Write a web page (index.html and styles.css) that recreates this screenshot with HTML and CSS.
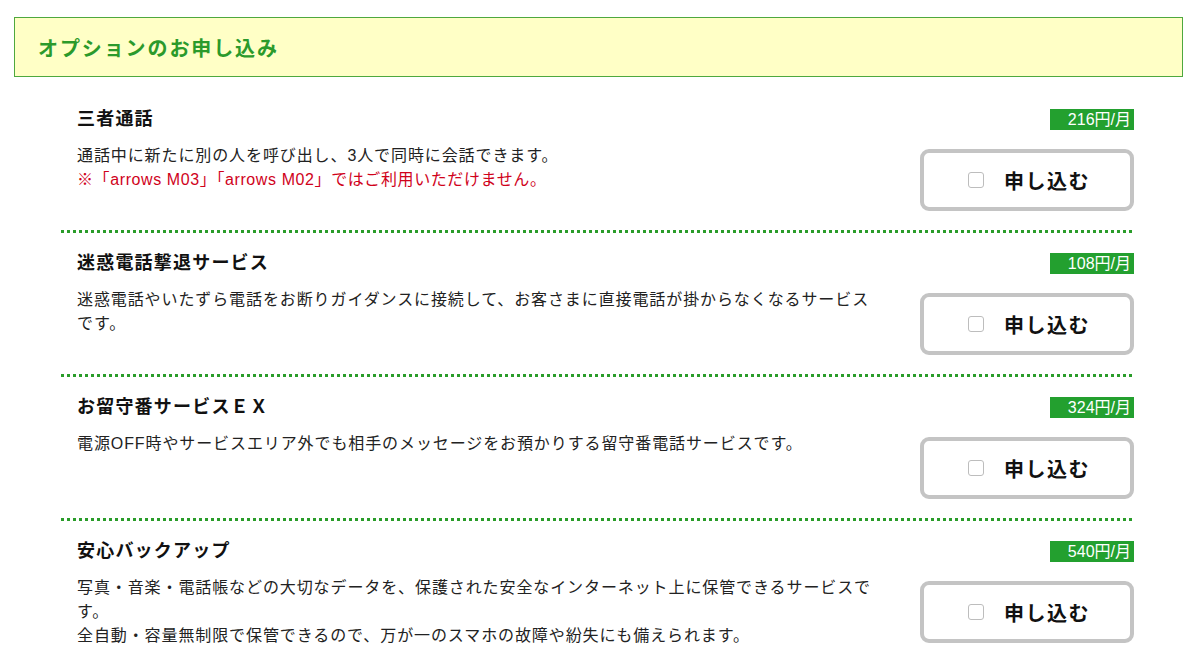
FILE: index.html
```html
<!DOCTYPE html>
<html lang="ja">
<head>
    <meta charset="UTF-8">
    <meta name="viewport" content="width=device-width, initial-scale=1.0">
    <title>オプションのお申し込み</title>
    <link rel="stylesheet" href="styles.css">
</head>
<body>
    <h2 class="section-title">オプションのお申し込み</h2>

    <div class="options">
        <div class="option">
            <h3 class="option-name">三者通話</h3>
            <div class="price">216円/月</div>
            <div class="desc">
                通話中に新たに別の人を呼び出し、3人で同時に会話できます。<br>
                <span class="note">※「arrows M03」「arrows M02」ではご利用いただけません。</span>
            </div>
            <label class="apply"><input type="checkbox" class="check"><span>申し込む</span></label>
        </div>

        <div class="option">
            <h3 class="option-name">迷惑電話撃退サービス</h3>
            <div class="price">108円/月</div>
            <div class="desc">迷惑電話やいたずら電話をお断りガイダンスに接続して、お客さまに直接電話が掛からなくなるサービスです。</div>
            <label class="apply"><input type="checkbox" class="check"><span>申し込む</span></label>
        </div>

        <div class="option">
            <h3 class="option-name">お留守番サービスＥＸ</h3>
            <div class="price">324円/月</div>
            <div class="desc">電源OFF時やサービスエリア外でも相手のメッセージをお預かりする留守番電話サービスです。</div>
            <label class="apply"><input type="checkbox" class="check"><span>申し込む</span></label>
        </div>

        <div class="option">
            <h3 class="option-name">安心バックアップ</h3>
            <div class="price">540円/月</div>
            <div class="desc">
                写真・音楽・電話帳などの大切なデータを、保護された安全なインターネット上に保管できるサービスです。<br>
                全自動・容量無制限で保管できるので、万が一のスマホの故障や紛失にも備えられます。
            </div>
            <label class="apply"><input type="checkbox" class="check"><span>申し込む</span></label>
        </div>
    </div>
</body>
</html>
```

FILE: styles.css
```css
body {
    margin: 17px 15px 0 14px;
    font-family: "Liberation Sans", "Noto Sans CJK JP", sans-serif;
    color: #222;
    background: #fff;
}

.section-title {
    margin: 0;
    height: 58px;
    display: flex;
    align-items: center;
    padding-left: 23px;
    background: #ffffc6;
    border: 1px solid #4ea83e;
    color: #2b9a2b;
    font-size: 20px;
    letter-spacing: 1.9px;
    font-weight: bold;
}

.options {
    margin: 12px 49px 0 47px;
}

/* dotted divider drawn as square dots */
.option {
    display: grid;
    grid-template-columns: 800px 214px;
    column-gap: 43px;
    row-gap: 14px;
    padding: 19px 0 22px 16px;
    background-image: linear-gradient(to right, #2a9c2a 3px, transparent 3px);
    background-size: 6px 3px;
    background-position: left bottom;
    background-repeat: repeat-x;
}

.option-name {
    margin: 0;
    font-size: 18px;
    line-height: 22px;
    letter-spacing: 1.2px;
    font-weight: bold;
    color: #111;
}

.price {
    justify-self: end;
    align-self: center;
    width: 84px;
    height: 21px;
    line-height: 21px;
    box-sizing: border-box;
    padding-right: 3px;
    text-align: right;
    background: #23a02f;
    color: #fff;
    font-size: 16px;
}

.desc {
    font-size: 16px;
    line-height: 24px;
    letter-spacing: 0.9px;
}

.note {
    color: #d0021b;
    letter-spacing: 0.6px;
}

.apply {
    margin-top: 5px;
    height: 62px;
    box-sizing: border-box;
    border: 4px solid #c4c4c4;
    border-radius: 9px;
    display: flex;
    align-items: center;
    justify-content: center;
    gap: 20px;
    padding-left: 4px;
    font-size: 20px;
    font-weight: bold;
    letter-spacing: 1.5px;
    color: #111;
    cursor: pointer;
}

.check {
    appearance: none;
    margin: 0;
    width: 16px;
    height: 16px;
    border: 1px solid #bdbdbd;
    border-radius: 3px;
    background: #fff;
}
```
